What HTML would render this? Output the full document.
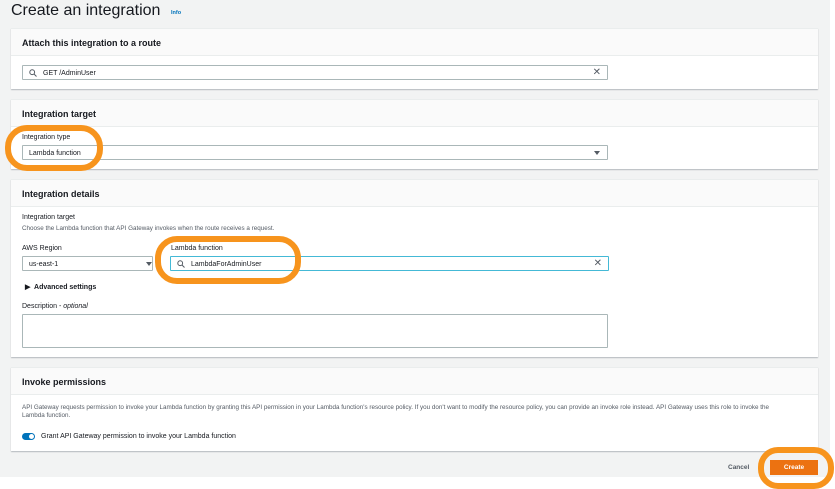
<!DOCTYPE html>
<html><head><meta charset="utf-8"><style>
*{box-sizing:border-box;margin:0;padding:0}
body{width:835px;height:486px;background:#fff;font-family:"Liberation Sans",sans-serif;color:#16191f;position:relative;overflow:hidden}
.bg{position:absolute;left:0;top:0;width:830px;height:477px;background:#f2f3f3}
.abs{position:absolute}
.panel{position:absolute;left:11px;width:807px;background:#fff;box-shadow:0 1px 1px #b5b9bd;border-top:1px solid #eaeded}
.ph{height:27px;background:#fafafa;border-bottom:1px solid #eaeded;font-weight:bold;font-size:9px;padding:9px 0 0 11px}
.inp{position:absolute;border:1px solid #aab7b8;background:#fff;height:15px;font-size:7px;line-height:15px;padding-left:6px;border-radius:1px}
.lbl{position:absolute;font-size:7px;color:#16191f}
.x{position:absolute;right:6px;top:1px;font-size:10px;color:#545b64;line-height:12px}
.tri{position:absolute;right:7px;top:5px;width:0;height:0;border-left:3.5px solid transparent;border-right:3.5px solid transparent;border-top:4px solid #545b64}
.ring{position:absolute;border:6px solid #f7941d;border-radius:22px}
</style></head><body>
<div class="bg"></div>
<div class="abs" style="left:11px;top:2px;font-size:16px;color:#16191f">Create an integration</div>
<div class="abs" style="left:171px;top:10px;font-size:5.5px;color:#0073bb;font-weight:bold">Info</div>

<div class="panel" style="top:28px;height:61px"><div class="ph">Attach this integration to a route</div></div>
<div class="inp" style="left:22px;top:65px;width:586px;padding-left:20px">GET /AdminUser
<svg class="abs" style="left:6px;top:3px" width="8" height="8" viewBox="0 0 8 8"><circle cx="3.2" cy="3.2" r="2.4" fill="none" stroke="#545b64" stroke-width="1"/><line x1="5" y1="5" x2="7.5" y2="7.5" stroke="#545b64" stroke-width="1"/></svg><span class="x">✕</span></div>

<div class="panel" style="top:99px;height:70px"><div class="ph">Integration target</div></div>
<div class="lbl" style="left:22px;top:134px">Integration type</div>
<div class="inp" style="left:22px;top:145px;width:586px">Lambda function<span class="tri"></span></div>

<div class="panel" style="top:179px;height:178px"><div class="ph">Integration details</div></div>
<div class="lbl" style="left:22px;top:214px">Integration target</div>
<div class="lbl" style="left:22px;top:225px;font-size:6.3px;color:#545b64">Choose the Lambda function that API Gateway invokes when the route receives a request.</div>
<div class="lbl" style="left:22px;top:245px">AWS Region</div>
<div class="inp" style="left:22px;top:256px;width:131px">us-east-1<span class="tri" style="right:0"></span></div>
<div class="lbl" style="left:171px;top:245px">Lambda function</div>
<div class="inp" style="left:170px;top:256px;width:439px;border:1.5px solid #44b9d6;padding-left:20px">LambdaForAdminUser
<svg class="abs" style="left:6px;top:3px" width="8" height="8" viewBox="0 0 8 8"><circle cx="3.2" cy="3.2" r="2.4" fill="none" stroke="#545b64" stroke-width="1"/><line x1="5" y1="5" x2="7.5" y2="7.5" stroke="#545b64" stroke-width="1"/></svg><span class="x">✕</span></div>
<div class="lbl" style="left:25px;top:283px;font-weight:bold">▶&nbsp; Advanced settings</div>
<div class="lbl" style="left:22px;top:303px">Description - <i>optional</i></div>
<div class="inp" style="left:22px;top:314px;width:586px;height:34px"></div>

<div class="panel" style="top:367px;height:84px"><div class="ph">Invoke permissions</div></div>
<div class="lbl" style="left:22px;top:404px;font-size:6.3px;color:#545b64;width:765px;line-height:8px">API Gateway requests permission to invoke your Lambda function by granting this API permission in your Lambda function's resource policy. If you don't want to modify the resource policy, you can provide an invoke role instead. API Gateway uses this role to invoke the Lambda function.</div>
<div class="abs" style="left:22px;top:433px;width:13px;height:7px;border-radius:4px;background:#0073bb"><div style="position:absolute;right:1px;top:1px;width:5px;height:5px;border-radius:50%;background:#fff"></div></div>
<div class="lbl" style="left:41px;top:433px">Grant API Gateway permission to invoke your Lambda function</div>

<div class="lbl" style="left:728px;top:464px;font-weight:bold;color:#545b64;font-size:6.5px">Cancel</div>
<div class="abs" style="left:770px;top:460px;width:48px;height:15px;background:#ec7211;color:#fff;font-size:6.5px;font-weight:bold;text-align:center;line-height:15px">Create</div>

<div class="ring" style="left:5px;top:125px;width:98px;height:46px"></div>
<div class="ring" style="left:155px;top:236px;width:146px;height:48px"></div>
<div class="ring" style="left:758px;top:447px;width:76px;height:42px;border-radius:20px"></div>
</body></html>
